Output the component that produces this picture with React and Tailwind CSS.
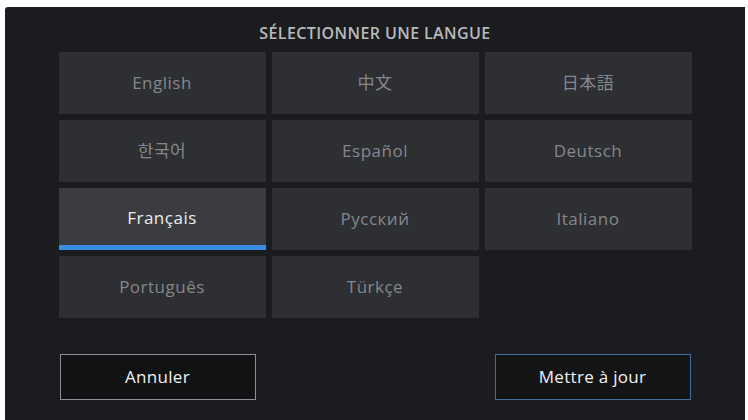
import React from 'react'

const languages = [
  { label: 'English' },
  { label: '中文' },
  { label: '日本語' },
  { label: '한국어' },
  { label: 'Español' },
  { label: 'Deutsch' },
  { label: 'Français', selected: true },
  { label: 'Русский' },
  { label: 'Italiano' },
  { label: 'Português' },
  { label: 'Türkçe' },
]

const LanguageCell = ({ label, selected }) => {
  if (selected) {
    return (
      <div className="relative flex h-[62px] items-center justify-center bg-[#3a3c41] font-medium text-[#ececec]">
        <span className="-mt-[2px]">{label}</span>
        <div className="absolute bottom-0 left-0 right-0 h-[5px] bg-[#3b8de0]"></div>
      </div>
    )
  }
  return (
    <div className="flex h-[62px] items-center justify-center bg-[#2d2f33] text-[#85878c]">
      {label}
    </div>
  )
}

export default function App() {
  return (
    <div
      className="h-[420px] w-[748px] overflow-hidden bg-white pl-[5px] pr-[3px] pt-[7px]"
      style={{ fontFamily: '"Open Sans", "Noto Sans CJK JP", "Noto Sans CJK KR", sans-serif' }}
    >
      <div className="flex h-[420px] flex-col rounded-tl-[3px] bg-[#1b1c1f]">
        {/* Title */}
        <div className="h-[45px] pt-[15px] text-center text-[16px] font-semibold leading-[22px] tracking-[0.4px] text-[#b9babd]">
          SÉLECTIONNER UNE LANGUE
        </div>

        {/* Language grid */}
        <div className="mx-auto grid w-[633px] grid-cols-3 gap-[6px] text-[17px] tracking-[0.5px]">
          {languages.map((lang) => (
            <LanguageCell key={lang.label} label={lang.label} selected={lang.selected} />
          ))}
        </div>

        {/* Actions */}
        <div className="mx-auto mt-[36px] flex w-[631px] justify-between text-[17px] font-medium tracking-[0.3px]">
          <button className="h-[46px] w-[196px] border-[1.5px] border-[#8e8f92] bg-[#111214] text-[#f0f0f0]">
            Annuler
          </button>
          <button className="h-[46px] w-[196px] border-[1.5px] border-[#3f6d9f] bg-[#141416] text-[#f0f0f0]">
            Mettre à jour
          </button>
        </div>
      </div>
    </div>
  )
}
